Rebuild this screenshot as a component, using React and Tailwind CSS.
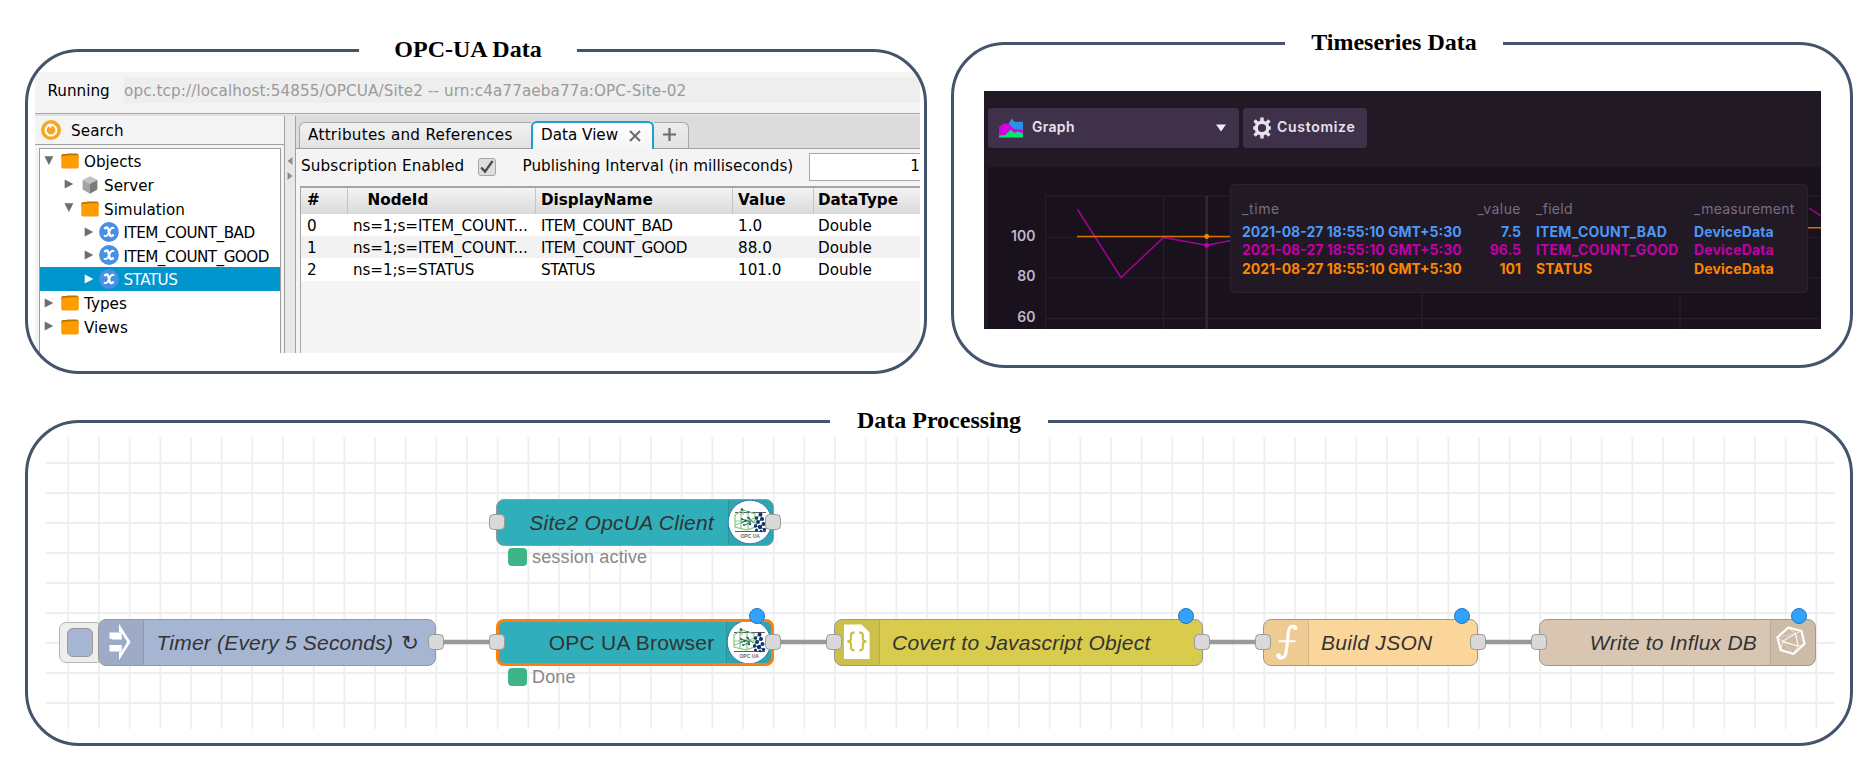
import React from 'react';

/* ---------- shared frame ---------- */

function Panel({ title, titleLeft, className, children }) {
  return (
    <section className={`relative shrink-0 ${className}`}>
      {children}
      <div className="pointer-events-none absolute inset-0 rounded-[54px] border-[3px] border-[#44546a]" />
      <h2
        className={`absolute -top-[14px] flex h-[28px] w-[218px] items-center justify-center bg-white font-['Liberation_Serif',serif] text-[24px] leading-none font-bold whitespace-nowrap text-black ${titleLeft}`}
      >
        {title}
      </h2>
    </section>
  );
}

/* ---------- OPC-UA data ---------- */

function Folder() {
  return (
    <svg className="mt-px h-[16px] w-[18px] shrink-0" viewBox="0 0 18 16">
      <path d="M0.3 3 V2 L1.8 0.9 H5.6 L6.4 0.4 H16 L17.6 1.8 V5 H0.3Z" fill="#b87200" />
      <path d="M0.3 2.8 H6 L7 2.2 H17.7 V14 Q17.7 15.4 16.3 15.4 H1.7 Q0.3 15.4 0.3 14Z" fill="#ff9c00" />
    </svg>
  );
}

function Cube() {
  return (
    <svg className="mt-px h-[18px] w-[16px] shrink-0" viewBox="0 0 16 18">
      <path d="M8 0.3 L15.4 4 L8 7.8 L0.6 4Z" fill="#c2c2c2" />
      <path d="M0.6 4 L8 7.8 V17.7 L0.6 13.6Z" fill="#a3a3a3" />
      <path d="M15.4 4 L8 7.8 V17.7 L15.4 13.6Z" fill="#7b7b7b" />
    </svg>
  );
}

function Variable() {
  return (
    <svg className="h-[20px] w-[20px] shrink-0" viewBox="0 0 20 20">
      <circle cx="10" cy="10" r="9.9" fill="#4a90e2" />
      <g fill="none" stroke="#fff" strokeLinecap="round">
        <path d="M6 6.2 C8.6 4.6 9.6 6.4 10 9.8 C10.4 13.4 11.4 15 13.9 13.2" strokeWidth="2.5" />
        <path d="M14.6 6 C12.6 5 11.4 7.4 10.2 9.8 C8.8 12.6 7.6 15 5.5 13.7" strokeWidth="1.8" />
      </g>
    </svg>
  );
}

function Arrow({ open, light }) {
  const fill = light ? '#ffffff' : '#6e6e6e';
  return (
    <svg className="h-[10px] w-[10px] shrink-0" viewBox="0 0 10 10">
      {open ? <path d="M0.4 0.3 H9.4 L4.9 8.9Z" fill={fill} /> : <path d="M0.7 0.6 L9.3 5 L0.7 9.4Z" fill={fill} />}
    </svg>
  );
}

const TREE = [
  { label: 'Objects', pad: 'pl-[4px]', icon: 'folder', open: true },
  { label: 'Server', pad: 'pl-[24px]', icon: 'cube' },
  { label: 'Simulation', pad: 'pl-[24px]', icon: 'folder', open: true },
  { label: 'ITEM_COUNT_BAD', pad: 'pl-[43.5px]', icon: 'var' },
  { label: 'ITEM_COUNT_GOOD', pad: 'pl-[43.5px]', icon: 'var' },
  { label: 'STATUS', pad: 'pl-[43.5px]', icon: 'var', selected: true },
  { label: 'Types', pad: 'pl-[4px]', icon: 'folder' },
  { label: 'Views', pad: 'pl-[4px]', icon: 'folder' },
];

function TreeRow({ label, pad, icon, open, selected }) {
  return (
    <div className={`flex h-[23.65px] items-center ${pad} ${selected ? 'bg-[#0096cd] text-white' : ''}`}>
      <Arrow open={open} light={selected} />
      <span className="ml-[6px] flex w-[19px] shrink-0 justify-center">
        {icon === 'folder' && <Folder />}
        {icon === 'cube' && <Cube />}
        {icon === 'var' && <Variable />}
      </span>
      <span className={`ml-[5px] pt-[4px] ${icon === 'var' ? 'tracking-[-0.53px]' : ''}`}>{label}</span>
    </div>
  );
}

const COLS = 'grid grid-cols-[47px_188px_197px_81px_1fr] items-center';
const ROWS = [
  ['0', 'ns=1;s=ITEM_COUNT...', 'ITEM_COUNT_BAD', '1.0', 'Double'],
  ['1', 'ns=1;s=ITEM_COUNT...', 'ITEM_COUNT_GOOD', '88.0', 'Double'],
  ['2', 'ns=1;s=STATUS', 'STATUS', '101.0', 'Double'],
];

function DataView() {
  return (
    <div className="flex min-w-0 flex-1 flex-col">
      <div className="flex h-[33px] items-end border-b border-[#a0a0a0] bg-[#dcdcdc] pl-[3px]">
        <div className="flex h-[26px] w-[232px] items-center rounded-tl-[6px] border-t border-l border-[#a8a8a8] bg-linear-to-b from-[#f2f2f2] to-[#e2e2e2] pt-px pl-[8px] tracking-[0.28px]">
          Attributes and References
        </div>
        <div className="-mb-px flex h-[28px] w-[123px] items-center rounded-t-[6px] border-2 border-b-0 border-[#1ba1d0] bg-linear-to-b from-[#ffffff] to-[#f5f5f5] pl-[8px]">
          Data View
          <svg className="-mt-px ml-[11px] h-[12px] w-[12px]" viewBox="0 0 12 12">
            <path d="M1 1 L11 11 M11 1 L1 11" stroke="#6a6a6a" strokeWidth="2" />
          </svg>
        </div>
        <div className="flex h-[26px] w-[35px] items-center rounded-tr-[6px] border-t border-r border-[#a8a8a8] bg-linear-to-b from-[#ececec] to-[#e2e2e2] pb-[2px] pl-[9px]">
          <svg className="h-[13px] w-[13px]" viewBox="0 0 13 13">
            <path d="M0 6.5 H13 M6.5 0 V13" stroke="#6a6a6a" strokeWidth="2.2" />
          </svg>
        </div>
      </div>
      <div className="flex h-[37px] items-center pb-[2px] pl-[5px]">
        <span className="w-[177px] tracking-[0.14px]">Subscription Enabled</span>
        <span className="flex h-[18px] w-[18px] items-center justify-center rounded-[3px] border border-[#a5a5a5] bg-[#dedede]">
          <svg className="h-[14px] w-[14px]" viewBox="0 0 14 14">
            <path d="M1.2 7.4 L5 11.6 L12.6 1" fill="none" stroke="#4a4a4a" strokeWidth="2.3" />
          </svg>
        </span>
        <span className="ml-[26.5px] tracking-[0.03px]">Publishing Interval (in milliseconds)</span>
        <span className="ml-auto flex h-[28px] w-[111px] items-center justify-end border border-r-0 border-[#a9a9a9] bg-white">
          1
        </span>
      </div>
      <div className="ml-[4px] flex-1 border-t-2 border-l border-[#a5a5a5]">
        <div className={`${COLS} h-[25.5px] bg-linear-to-b from-[#f3f3f3] to-[#dadada] font-bold`}>
          <span className="flex h-full items-center border-r border-[#c4c4c4] pl-[6px]">#</span>
          <span className="flex h-full items-center border-r border-[#c4c4c4] pl-[19.5px]">NodeId</span>
          <span className="flex h-full items-center border-r border-[#c4c4c4] pl-[5px]">DisplayName</span>
          <span className="flex h-full items-center border-r border-[#c4c4c4] pl-[5px]">Value</span>
          <span className="pl-[4px]">DataType</span>
        </div>
        {ROWS.map((r, i) => (
          <div key={r[0]} className={`${COLS} h-[22.4px] pt-[3px] ${i % 2 ? 'bg-[#f2f2f2]' : 'bg-white'}`}>
            <span className="pl-[6px]">{r[0]}</span>
            <span className="pl-[5px] tracking-[-0.1px]">{r[1]}</span>
            <span className="pl-[5px] tracking-[-0.5px]">{r[2]}</span>
            <span className="pl-[5px]">{r[3]}</span>
            <span className="pl-[4px]">{r[4]}</span>
          </div>
        ))}
      </div>
    </div>
  );
}

function OpcPanel() {
  return (
    <Panel title="OPC-UA Data" titleLeft="left-[334px]" className="mt-[7px] h-[325px] w-[902px]">
      <div className="pt-[23px] pl-[10px]">
        <div className="flex h-[280.7px] w-[885px] flex-col overflow-hidden bg-[#f4f4f4] font-['DejaVu_Sans',sans-serif] text-[15.2px] leading-none whitespace-nowrap text-black">
          <div className="flex h-[42px] shrink-0 items-center border-b border-[#a8a8a8] pb-[5px]">
            <span className="w-[90px] pt-[3px] pl-[12.5px]">Running</span>
            <span className="-ml-px flex h-[26px] flex-1 items-center bg-[#eeeeee] pt-[3px] tracking-[0.1px] text-[#9a9a9a]">
              opc.tcp://localhost:54855/OPCUA/Site2 -- urn:c4a77aeba77a:OPC-Site-02
            </span>
          </div>
          <div className="h-[2px] shrink-0 bg-[#e2e2e2]" />
          <div className="flex min-h-0 flex-1">
            <div className="flex w-[249px] shrink-0 flex-col">
              <div className="flex h-[29px] shrink-0 items-center border-b border-[#a0a0a0] pl-[6px]">
                <svg className="h-[20px] w-[20px]" viewBox="0 0 20 20">
                  <circle cx="10" cy="10" r="10" fill="#f5a623" />
                  <circle cx="10" cy="10.2" r="5.4" fill="none" stroke="#fff" strokeWidth="2" />
                  <path d="M6.2 4 L11.6 3.4 L9.8 8.6Z" fill="#fff" />
                </svg>
                <span className="ml-[10px] pt-[3px] tracking-[0.1px]">Search</span>
              </div>
              <div className="mt-[3px] mr-[3px] ml-[4px] flex-1 border border-b-0 border-[#9e9e9e] bg-white">
                {TREE.map((t) => (
                  <TreeRow key={t.label} {...t} />
                ))}
              </div>
            </div>
            <div className="flex w-[12px] shrink-0 flex-col items-center border-x border-[#a0a0a0] bg-[#e8e8e8] pt-[41px]">
              <svg className="h-[24px] w-[6px]" viewBox="0 0 6 24">
                <path d="M5.5 0 V8 L0.5 4Z M0.5 15 V23 L5.5 19Z" fill="#8c8c8c" />
              </svg>
            </div>
            <DataView />
          </div>
        </div>
      </div>
    </Panel>
  );
}

/* ---------- Timeseries data ---------- */

function GraphIcon() {
  return (
    <svg className="h-[20px] w-[24px]" viewBox="0 0 24 20">
      <path d="M9.5 6 L12.5 0.6 L16 4 L24 3.4 V13 H9Z" fill="#2f8fe8" />
      <path d="M0 9 L4.5 5.5 H9 L15 11 L24 12 V16 L0 19Z" fill="#d400e0" />
      <path d="M0 17.4 L6 17 L12 11.6 L15 15 L19 13.4 L24 15.6 V19.4 H0Z" fill="#00e870" />
    </svg>
  );
}

function Gear() {
  return (
    <svg className="h-[22px] w-[18px]" viewBox="0 0 18 22">
      <circle cx="9" cy="11" r="5.8" fill="none" stroke="#e7e3ee" strokeWidth="3.4" />
      <g stroke="#e7e3ee" strokeWidth="3.4">
        <path d="M9 5 V0.6 M9 17 V21.4 M4.4 6.4 L1.6 3.4 M13.6 6.4 L16.4 3.4 M4.4 15.6 L1.6 18.6 M13.6 15.6 L16.4 18.6 M2.6 11 H0.2 M15.4 11 H17.8" />
      </g>
    </svg>
  );
}

const SERIES = [
  { value: '7.5', field: 'ITEM_COUNT_BAD', color: 'text-[#4d97f5]', height: 'h-[20px]' },
  { value: '96.5', field: 'ITEM_COUNT_GOOD', color: 'text-[#c000a8]', height: 'h-[16px]' },
  { value: '101', field: 'STATUS', color: 'text-[#ff8500]', height: 'h-[22px]' },
];
const TIP_COLS = 'grid grid-cols-[222px_57px_15px_158px_1fr] items-center';

function Tooltip() {
  return (
    <div className="absolute top-[17.5px] left-[242px] h-[109px] w-[578px] rounded-[4px] border border-[#2a2230] bg-[#211924] pt-[14.5px] pl-[11px] text-[14px]">
      <div className={`${TIP_COLS} h-[22px] pb-[3px] text-[#786b85]`}>
        <span className="tracking-[0.6px]">_time</span>
        <span className="text-right tracking-[0.45px]">_value</span>
        <span />
        <span className="tracking-[0.3px]">_field</span>
        <span className="tracking-[0.27px]">_measurement</span>
      </div>
      {SERIES.map((s) => (
        <div key={s.field} className={`${TIP_COLS} ${s.height} ${s.color} font-bold`}>
          <span>2021-08-27 18:55:10 GMT+5:30</span>
          <span className="text-right">{s.value}</span>
          <span />
          <span className="tracking-[0.17px]">{s.field}</span>
          <span className="tracking-[0.12px]">DeviceData</span>
        </div>
      ))}
    </div>
  );
}

function TimeseriesPanel() {
  return (
    <Panel title="Timeseries Data" titleLeft="left-[334px]" className="h-[326px] w-[902px]">
      <div className="pt-[49px] pl-[33px]">
        <div className="flex h-[238px] w-[837px] flex-col bg-[#211a24] pl-[4px] font-[Inter,sans-serif] leading-none whitespace-nowrap">
          <div className="flex h-[75.5px] shrink-0 gap-[4px] pt-[16.5px] text-[14px] font-semibold text-[#e7e3ee]">
            <div className="flex h-[40px] w-[251px] items-center rounded-[4px] bg-[#3f3149] pr-[13px] pl-[11px]">
              <GraphIcon />
              <span className="-mt-px ml-[9px] tracking-[0.3px]">Graph</span>
              <svg className="ml-auto h-[8px] w-[10px]" viewBox="0 0 10 8">
                <path d="M0 0.5 H10 L5 7.5Z" fill="#f0edf5" />
              </svg>
            </div>
            <div className="flex h-[40px] w-[124px] items-center rounded-[4px] bg-[#3f3149] pl-[10px]">
              <Gear />
              <span className="-mt-px ml-[6px] tracking-[0.7px]">Customize</span>
            </div>
          </div>
          <div className="relative flex flex-1 bg-[#19111c]">
            <div className="flex w-[47.5px] shrink-0 flex-col items-end gap-[26.5px] pt-[62px] text-[14px] font-semibold text-[#bfb8c9]">
              <span>100</span>
              <span>80</span>
              <span>60</span>
            </div>
            <svg className="ml-[9.5px] h-[162px] w-[776px]" viewBox="1045 166.5 776 162">
              <g stroke="#261d2a" strokeWidth="1.6" fill="none">
                <path d="M1045.3 195.5 V329 M1163.5 195.5 V329 M1422 195.5 V329 M1680 195.5 V329" />
                <path d="M1045 195.5 H1821 M1045 237 H1821 M1045 277.3 H1821 M1045 318 H1821" />
              </g>
              <path d="M1206.7 195.5 V329" stroke="#31283a" strokeWidth="2.4" />
              <path d="M1077.5 209 L1121 277 L1163.5 237 L1206.7 244.7 L1230 240.3 M1809 207.5 L1821 215.5" fill="none" stroke="#a80098" strokeWidth="1.5" />
              <path d="M1077 236 H1231 M1806 227.3 H1821" stroke="#d47200" strokeWidth="1.6" />
              <circle cx="1206.7" cy="236" r="2.4" fill="#ff8500" />
              <circle cx="1206.7" cy="244.9" r="2.4" fill="#c800b4" />
            </svg>
            <Tooltip />
          </div>
        </div>
      </div>
    </Panel>
  );
}

/* ---------- Data processing flow ---------- */

const ORIGIN = { x: 46, y: 437 };
const at = (x, y) => ({ left: x - ORIGIN.x, top: y - ORIGIN.y });

function InjectIcon() {
  return (
    <svg className="h-[38px] w-[22px]" viewBox="0 0 22 38">
      <path d="M10 0.8 L21.5 19 L10 37.2 V29 H12.2 L18.2 19 L12.2 9.4 H10Z" fill="#fff" />
      <path d="M0.5 9.4 H12.8 V16.4 H3 V15.8 H0.5Z M0.5 22 H12.8 V28.6 H0.5Z" fill="#fff" />
    </svg>
  );
}

function OpcIcon() {
  return (
    <svg className="h-[46px] w-[46px]" viewBox="0 0 46 46">
      <circle cx="23" cy="23" r="21.8" fill="#fff" stroke="#2d6cb0" strokeWidth="0.9" />
      <path d="M8 13.5 H39 M8 32.5 H39" stroke="#4a4a4a" strokeWidth="0.9" />
      <g fill="none" stroke="#86c987" strokeWidth="1.2">
        <path d="M8 16 L16 11 L28 15 V28 L20 31 L8 28Z" />
        <path d="M8 22 H28 M14 14 V30 M21 13 V30 M8 26 L28 19 M16 11 V16" />
      </g>
      <g stroke="#2f7a62" strokeWidth="1">
        <path d="M15 20 L24 23 L18 26 M20 18 L27 24 M14 24 L20 21" fill="none" />
      </g>
      <g fill="#2c5f5a">
        <circle cx="15" cy="20" r="1.1" />
        <circle cx="18.5" cy="22" r="1.2" />
        <circle cx="22" cy="19" r="1.1" />
        <circle cx="23" cy="25" r="1.2" />
        <circle cx="17" cy="26" r="1.1" />
        <circle cx="15" cy="10.5" r="1.3" />
        <circle cx="21.5" cy="13" r="1.1" />
      </g>
      <g fill="#17366f">
        <circle cx="33.5" cy="15.5" r="2" />
        <circle cx="29.5" cy="19" r="1.7" />
        <circle cx="35" cy="20" r="2.1" />
        <circle cx="31" cy="23" r="2" />
        <circle cx="36.5" cy="25" r="2" />
        <circle cx="28.5" cy="27" r="1.7" />
        <circle cx="33" cy="28" r="2.2" />
        <circle cx="37.5" cy="30.5" r="1.7" />
        <circle cx="29.5" cy="31" r="1.6" />
        <circle cx="34" cy="32" r="1.3" />
      </g>
      <path d="M33.5 15.5 L29.5 19 L31 23 L35 20Z M31 23 L28.5 27 L33 28 L36.5 25 M33 28 L37.5 30.5" fill="none" stroke="#17366f" strokeWidth="0.8" />
      <text x="23.2" y="39.4" textAnchor="middle" fontFamily="Liberation Sans" fontSize="5" fontWeight="bold" fill="#666">
        OPC UA
      </text>
    </svg>
  );
}

function JsonIcon() {
  return (
    <svg className="h-[36px] w-[26px]" viewBox="0 0 26 36">
      <path d="M0 0.5 H17.5 L25.6 8.5 V35 H0Z" fill="#fff" />
      <path
        d="M10.6 8.6 H9.6 Q7 8.6 7 11.2 V14.4 Q7 17.2 3.4 17.4 Q7 17.6 7 20.6 V23.6 Q7 26.2 9.6 26.2 H10.6 M15.2 8.6 H16.2 Q18.8 8.6 18.8 11.2 V14.4 Q18.8 17.2 22.4 17.4 Q18.8 17.6 18.8 20.6 V23.6 Q18.8 26.2 16.2 26.2 H15.2"
        fill="none"
        stroke="#cbbd40"
        strokeWidth="2.1"
      />
    </svg>
  );
}

function FunctionIcon() {
  return (
    <svg className="h-[36px] w-[22px]" viewBox="0 0 22 36">
      <path
        d="M19.8 4.4 C19.2 1.6 13.6 0.8 12.6 6.8 C12 11 11.4 20 10.2 27.6 C9.2 35.4 3 35.2 1.6 31.4"
        fill="none"
        stroke="#fff"
        strokeWidth="3.1"
        strokeLinecap="round"
      />
      <circle cx="2.8" cy="31.4" r="2.2" fill="#fff" />
      <circle cx="19.2" cy="4.2" r="1.9" fill="#fff" />
      <path d="M3.4 17.2 H18.6" stroke="#fff" strokeWidth="2" strokeLinecap="round" />
    </svg>
  );
}

function InfluxIcon() {
  return (
    <svg className="h-[30px] w-[30px]" viewBox="0 0 30 30" fill="none" stroke="#fff" strokeLinejoin="round">
      <path d="M12.3 1.6 L25.4 5 L28.6 17.8 L17.4 28 L4.6 24 L1.4 11.2Z" strokeWidth="2.1" />
      <path d="M6.6 15.4 L19.4 7.6 L22.2 20.2Z" strokeWidth="1.1" />
      <path d="M1.4 11.2 L6.6 15.4 L4.6 24 M12.3 1.6 L19.4 7.6 L25.4 5 M28.6 17.8 L22.2 20.2 L17.4 28" strokeWidth="1" opacity="0.75" />
      <path d="M1.4 11.2 L19.4 7.6 M28.6 17.8 L19.4 7.6 M17.4 28 L6.6 15.4" strokeWidth="0.7" opacity="0.5" />
    </svg>
  );
}

const NODES = [
  { id: 'timer', x: 98, y: 619, w: 338, label: 'Timer (Every 5 Seconds)', suffix: '↻', fill: 'bg-[#a6b5d2]', side: 'left', icon: InjectIcon, iconPos: 'pr-[2px]', italic: true, pad: 'pl-[12.5px]', track: 'tracking-[0.2px]' },
  { id: 'client', x: 496, y: 499, w: 277.5, label: 'Site2 OpcUA Client', fill: 'bg-[#30afba]', side: 'right', icon: OpcIcon, iconPos: 'pr-[2px]', italic: true, status: 'session active', pad: 'pr-[13.5px]', track: 'tracking-[0.25px]' },
  { id: 'browser', x: 496, y: 619, w: 277.5, label: 'OPC UA Browser', fill: 'bg-[#30afba]', side: 'right', icon: OpcIcon, iconPos: '', selected: true, changed: true, status: 'Done', pad: 'pr-[11px]', track: 'tracking-[0.25px]' },
  { id: 'json', x: 834, y: 619, w: 368.5, label: 'Covert to Javascript Object', fill: 'bg-[#d8cb4e]', side: 'left', icon: JsonIcon, iconPos: '', italic: true, changed: true, pad: 'pl-[12px]', track: 'tracking-[0.24px]' },
  { id: 'fn', x: 1263, y: 619, w: 215, label: 'Build JSON', fill: 'bg-[#fbd69b]', side: 'left', icon: FunctionIcon, iconPos: 'pl-[2px]', italic: true, changed: true, pad: 'pl-[12px]', track: 'tracking-[0.3px]' },
  { id: 'influx', x: 1539, y: 619, w: 276.5, label: 'Write to Influx DB', fill: 'bg-[#d8c6b2]', side: 'right', icon: InfluxIcon, iconPos: 'pr-[4px] pb-[2px]', italic: true, changed: true, pad: 'pr-[12.5px]', track: 'tracking-[0.22px]' },
];

const PORTS = [
  [435.5, 642], [496.5, 522.3], [773, 522.3], [496.5, 642], [773, 642], [834, 642],
  [1202, 642], [1263.3, 642], [1477.7, 642], [1539.3, 642],
];

function FlowNode({ node }) {
  const { x, y, w, label, suffix, fill, side, icon: Icon, iconPos, italic, selected, pad, track } = node;
  const shade = side === 'left' ? 'border-r' : 'border-l';
  return (
    <div
      className={`absolute flex h-[46.5px] items-stretch overflow-hidden rounded-[8px] ${side === 'right' ? 'flex-row-reverse' : ''} ${fill} ${selected ? 'border-[3px] border-[#ff7f0e]' : 'border-[1.5px] border-[#999]'}`}
      style={{ ...at(x, y), width: w }}
    >
      <div className={`flex w-[45px] shrink-0 items-center justify-center ${shade} border-black/10 bg-black/5 ${iconPos}`}>
        <div className="shrink-0"><Icon /></div>
      </div>
      <div className={`flex flex-1 items-center ${side === 'right' ? 'justify-end' : ''} ${pad} ${track} ${italic ? 'italic' : ''} text-[21px] text-[#333]`}>
        {label}
        {suffix && <span className="ml-[8px]">{suffix}</span>}
      </div>
    </div>
  );
}

function FlowPanel() {
  return (
    <Panel title="Data Processing" titleLeft="left-[805px]" className="mt-[46px] ml-[25px] h-[326px] w-[1828px]">
      <div className="pt-[17px] pl-[21px]">
        <div className="relative h-[292px] w-[1789px] font-['Liberation_Sans','DejaVu_Sans',sans-serif] leading-none whitespace-nowrap">
          <svg className="block h-[292px] w-[1789px]" viewBox="46 437 1789 292">
            <g stroke="#eeeeee" strokeWidth="1.8">
              {Array.from({ length: 58 }, (_, i) => (
                <line key={`v${i}`} x1={68.3 + i * 30.667} x2={68.3 + i * 30.667} y1="437" y2="729" />
              ))}
              {Array.from({ length: 9 }, (_, i) => (
                <line key={`h${i}`} y1={463 + i * 30} y2={463 + i * 30} x1="46" x2="1835" />
              ))}
            </g>
            <path d="M436 642 H496 M773 642 H834 M1202 642 H1263 M1478 642 H1539" stroke="#999" strokeWidth="4.5" />
          </svg>

          <div className="absolute flex h-[41px] w-[44px] items-center rounded-[7px] border-[1.5px] border-[#b5b5b5] bg-[#eeeeee] pl-[6.5px]" style={at(59, 621.7)}>
            <span className="h-[29px] w-[26px] rounded-[6px] border-[1.5px] border-[#999] bg-[#a6b5d2]" />
          </div>

          {NODES.map((n) => (
            <FlowNode key={n.id} node={n} />
          ))}
          {PORTS.map(([x, y]) => (
            <span key={`${x}-${y}`} className="absolute h-[16px] w-[16px] rounded-[4.5px] border-[1.5px] border-[#999] bg-[#d9d9d9]" style={at(x - 8, y - 8)} />
          ))}
          {NODES.filter((n) => n.status).map((n) => (
            <div key={n.status} className="absolute flex h-[20px] items-center gap-[5.5px] text-[18px] tracking-[0.16px] text-[#888]" style={at(n.x + 12, n.y + 48.3)}>
              <span className="h-[18px] w-[18.5px] rounded-[4px] bg-[#3fb488]" />
              {n.status}
            </div>
          ))}
          {NODES.filter((n) => n.changed).map((n) => (
            <span key={n.id} className="absolute h-[16px] w-[16px] rounded-full border-[1.5px] border-[#2276bd] bg-[#31a3fc]" style={at(n.x + n.w - 24.3, 608.3)} />
          ))}
        </div>
      </div>
    </Panel>
  );
}

export default function App() {
  return (
    <main className="h-[778px] w-[1870px] overflow-hidden bg-white">
      <div className="flex gap-[24px] pt-[42px] pl-[25px]">
        <OpcPanel />
        <TimeseriesPanel />
      </div>
      <FlowPanel />
    </main>
  );
}
